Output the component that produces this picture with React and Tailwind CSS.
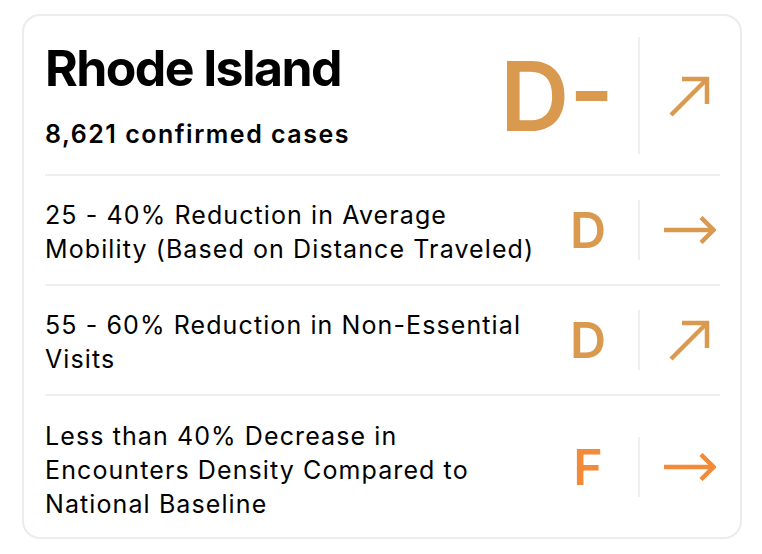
import React from 'react';

const ORANGE = '#d9994f';
const RED_ORANGE = '#f28a37';

const ArrowRight = ({ color }) => (
  <svg width="52" height="28" viewBox="0 0 52 28" fill="none">
    <path d="M0 14 H49" stroke={color} strokeWidth="4.5" />
    <path d="M37 1.5 L49.5 14 L37 26.5" stroke={color} strokeWidth="4.5" />
  </svg>
);

const ArrowUpRight = ({ color }) => (
  <svg width="42" height="42" viewBox="0 0 42 42" fill="none">
    <path d="M2 40 L38 4" stroke={color} strokeWidth="4.5" />
    <path d="M13 4 H38 V29" stroke={color} strokeWidth="4.5" />
  </svg>
);

const Arrow = ({ dir, color }) => (dir === 'up' ? <ArrowUpRight color={color} /> : <ArrowRight color={color} />);

const rows = [
  {
    lines: ['25 - 40% Reduction in Average', 'Mobility (Based on Distance Traveled)'],
    grade: 'D',
    color: ORANGE,
    dir: 'right',
    cls: 'h-[108px]',
  },
  {
    lines: ['55 - 60% Reduction in Non-Essential', 'Visits'],
    grade: 'D',
    color: ORANGE,
    dir: 'up',
    cls: 'h-[108px]',
  },
  {
    lines: ['Less than 40% Decrease in', 'Encounters Density Compared to', 'National Baseline'],
    grade: 'F',
    color: RED_ORANGE,
    dir: 'right',
    cls: 'h-[141px]',
    textPad: 'pt-[7px]',
  },
];

const Divider = () => <div className="h-[2px] bg-[#efefef]" />;

export default function App() {
  return (
    <div className="w-[762px] h-[554px] bg-white pl-[22px] pt-[14px]" style={{ fontFamily: 'Inter, "Noto Sans", sans-serif' }}>
      <div className="w-[720px] h-[525px] border-2 border-[#ececec] rounded-[18px] pl-[21px] pr-[20px]">
        <div className="h-[158px] flex items-center">
          <div className="flex-1 self-start pt-[23px]">
            <div className="text-[50px] leading-[58px] font-bold text-black tracking-[-1.6px]">Rhode Island</div>
            <div className="mt-[22px] text-[25px] leading-[30px] font-semibold text-black tracking-[1.5px]">8,621 confirmed cases</div>
          </div>
          <div className="text-[96px] leading-none font-semibold pr-[24px] pt-[2px]" style={{ color: ORANGE }}>D-</div>
          <div className="w-[2px] h-[117px] bg-[#efefef]" />
          <div className="w-[60px] ml-[20px] flex justify-center pt-[2px]">
            <ArrowUpRight color={ORANGE} />
          </div>
        </div>
        {rows.map((r, i) => (
          <div key={i}>
            <Divider />
            <div className={`flex items-center ${r.cls}`}>
              <div className={`flex-1 text-[25px] leading-[34px] text-black tracking-[1.1px] ${r.textPad || 'pt-[4px]'}`}>
                {r.lines.map((l, j) => (
                  <div key={j}>{l}</div>
                ))}
              </div>
              <div className="w-[60px] mr-[20px] text-center text-[50px] leading-none font-semibold" style={{ color: r.color }}>{r.grade}</div>
              <div className="w-[2px] h-[60px] bg-[#efefef]" />
              <div className="w-[60px] ml-[20px] flex justify-center">
                <Arrow dir={r.dir} color={r.color} />
              </div>
            </div>
          </div>
        ))}
      </div>
    </div>
  );
}
